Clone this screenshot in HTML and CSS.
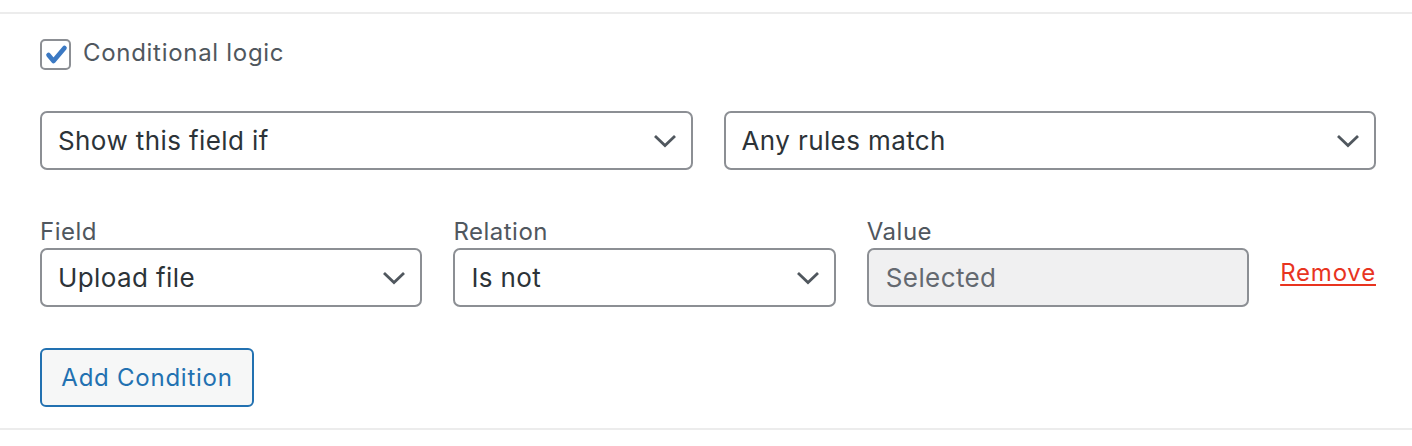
FILE: index.html
```html
<!DOCTYPE html>
<html>
<head>
<meta charset="utf-8">
<link rel="stylesheet" href="styles.css">
</head>
<body>
<div class="panel">
  <label class="toggle">
    <span class="checkbox">
      <svg width="31" height="31" viewBox="0 0 31 31"><path d="M8.5 16 L13.5 22 L24.5 9" fill="none" stroke="#3b79c3" stroke-width="4.6" stroke-linejoin="round" stroke-linecap="round"/></svg>
    </span>
    <span class="toggle-text">Conditional logic</span>
  </label>

  <div class="match-row">
    <div class="select"><span>Show this field if</span><svg class="chev" width="24" height="14" viewBox="0 0 24 14"><path d="M2 2 L12 11.5 L22 2" fill="none" stroke="#50575e" stroke-width="2.8"/></svg></div>
    <div class="select"><span>Any rules match</span><svg class="chev" width="24" height="14" viewBox="0 0 24 14"><path d="M2 2 L12 11.5 L22 2" fill="none" stroke="#50575e" stroke-width="2.8"/></svg></div>
  </div>

  <div class="rule-row">
    <div class="col">
      <div class="lbl">Field</div>
      <div class="select"><span>Upload file</span><svg class="chev" width="24" height="14" viewBox="0 0 24 14"><path d="M2 2 L12 11.5 L22 2" fill="none" stroke="#50575e" stroke-width="2.8"/></svg></div>
    </div>
    <div class="col">
      <div class="lbl">Relation</div>
      <div class="select"><span>Is not</span><svg class="chev" width="24" height="14" viewBox="0 0 24 14"><path d="M2 2 L12 11.5 L22 2" fill="none" stroke="#50575e" stroke-width="2.8"/></svg></div>
    </div>
    <div class="col">
      <div class="lbl">Value</div>
      <div class="input disabled"><span>Selected</span></div>
    </div>
    <div class="col remove-col">
      <a class="remove" href="#">Remove</a>
    </div>
  </div>

  <button class="add-btn">Add Condition</button>
</div>
</body>
</html>
```
FILE: styles.css
```css
html, body {
  margin: 0;
  padding: 0;
  background: #fff;
}
body {
  font-family: Inter, "Liberation Sans", Arial, sans-serif;
  color: #2c3338;
}
.panel {
  margin-top: 12px;
  border-top: 2px solid #ececec;
  border-bottom: 2px solid #ececec;
  padding: 25px 36px 21px 40px;
}
.toggle {
  display: flex;
  align-items: center;
  gap: 12px;
  height: 31px;
}
.checkbox {
  box-sizing: border-box;
  width: 31px;
  height: 31px;
  border: 2px solid #8c8f94;
  border-radius: 5px;
  display: flex;
  align-items: center;
  justify-content: center;
}
.checkbox svg {
  display: block;
  margin: -2px;
}
.toggle-text {
  font-size: 24px;
  color: #50575e;
  letter-spacing: 0.7px;
  position: relative;
  top: -2px;
}
.match-row {
  margin-top: 41px;
  display: grid;
  grid-template-columns: 1fr 1fr;
  gap: 31px;
}
.select, .input {
  box-sizing: border-box;
  height: 59px;
  border: 2px solid #8c8f94;
  border-radius: 7px;
  display: flex;
  align-items: center;
  justify-content: space-between;
  padding: 0 14px 0 16px;
  font-size: 26px;
  color: #2c3338;
  background: #fff;
}
.select span, .input span {
  letter-spacing: 0.4px;
}
.chev {
  display: block;
  flex: none;
}
.input.disabled {
  background: #f0f0f1;
  color: #646970;
  border-color: #8c8f94;
  padding-left: 17px;
}
.rule-row {
  margin-top: 47px;
  display: grid;
  grid-template-columns: 1fr 1fr 1fr auto;
  column-gap: 31px;
}
.lbl {
  font-size: 24px;
  line-height: 30px;
  color: #50575e;
  margin-bottom: 1px;
  letter-spacing: 0.5px;
}
.remove-col {
  display: flex;
  align-items: flex-end;
}
.remove {
  display: block;
  height: 59px;
  line-height: 50px;
  font-size: 24px;
  letter-spacing: 0.8px;
  color: #e8341f;
  text-decoration: underline;
  text-underline-offset: 3px;
  text-decoration-thickness: 2px;
}
.add-btn {
  display: block;
  margin-top: 41px;
  box-sizing: border-box;
  height: 59px;
  width: 214px;
  border: 2px solid #2271b1;
  border-radius: 6px;
  background: #f6f7f7;
  color: #2271b1;
  font-family: Inter, "Liberation Sans", Arial, sans-serif;
  font-size: 24px;
  letter-spacing: 0.75px;
  padding: 0;
}
```
